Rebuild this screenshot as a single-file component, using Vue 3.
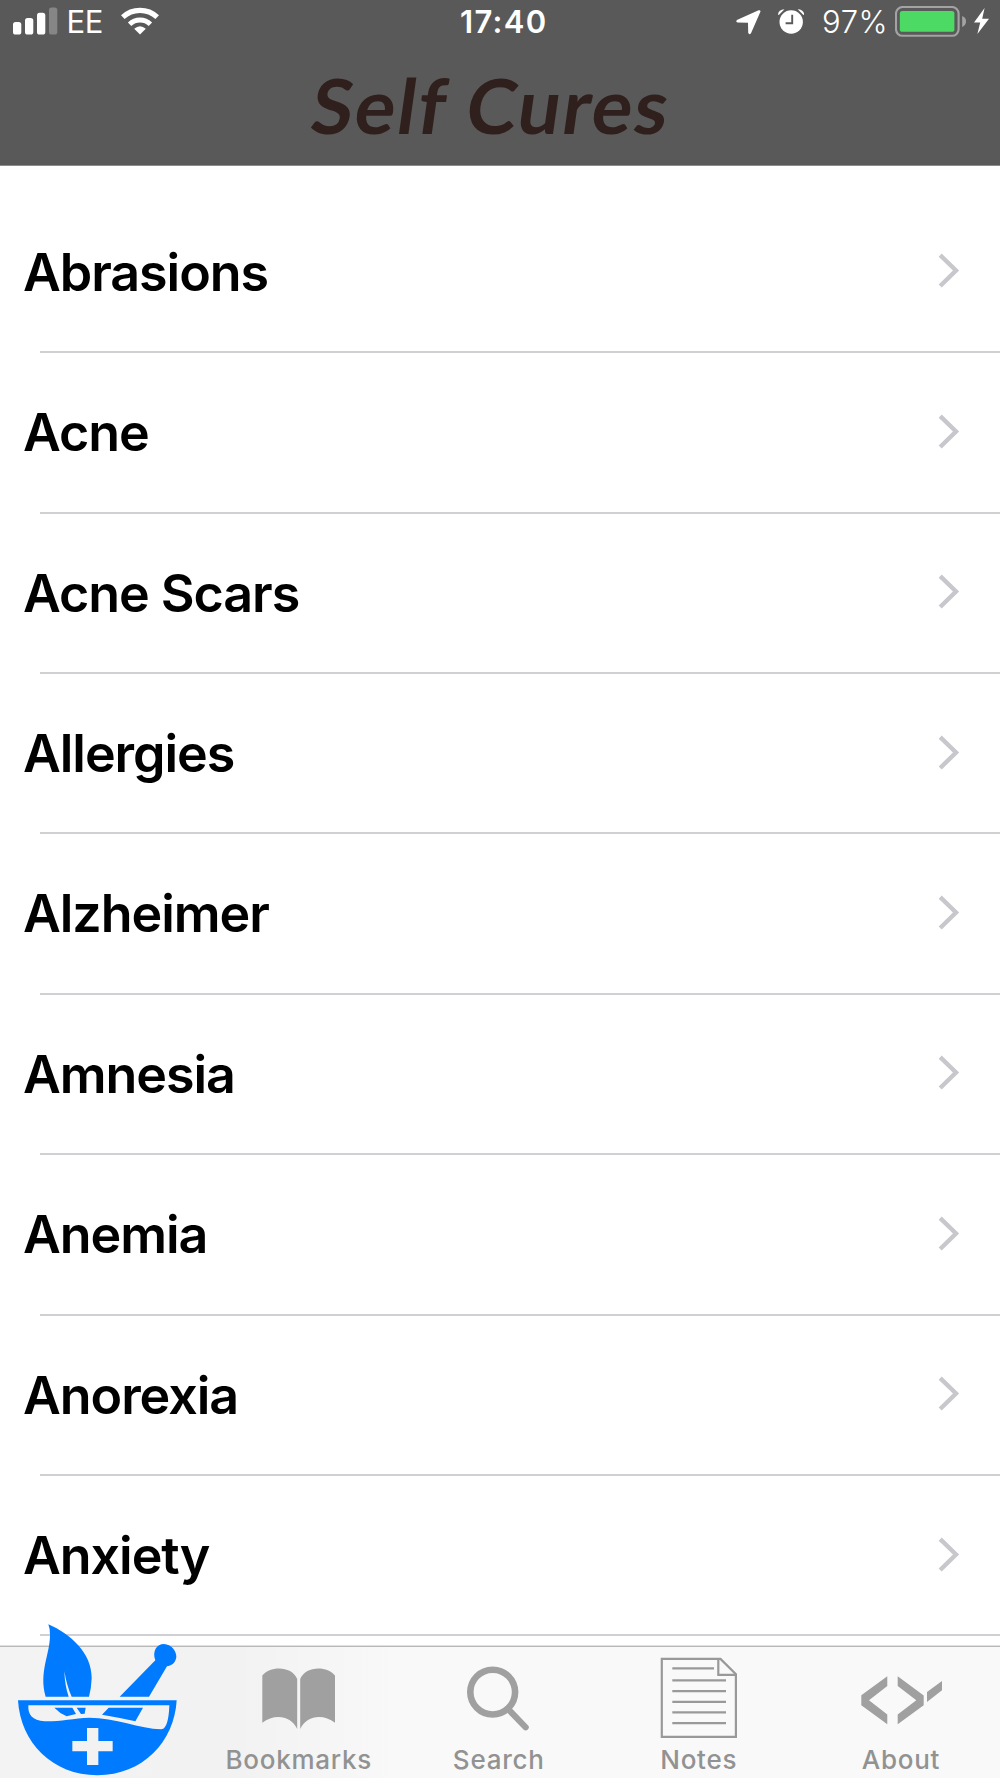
<template>
  <div class="app">
    <header class="header">
      <div class="status">
        <div class="status-left">
          <svg class="signal" width="45" height="28" viewBox="0 0 45 28" fill="#fff">
            <rect x="0" y="15" width="8.3" height="12.6" rx="2.6" />
            <rect x="12" y="11" width="8.3" height="16.6" rx="2.6" />
            <rect x="24" y="5.8" width="8.3" height="21.8" rx="2.6" />
            <rect x="36" y="0.5" width="8.3" height="27.1" rx="2.6" opacity="0.27" />
          </svg>
          <span class="carrier">EE</span>
          <svg class="wifi" width="38" height="28" viewBox="0 0 38 28">
            <g fill="none" stroke="#fff" stroke-width="5.2">
              <path d="M1.8 10.2a25.2 25.2 0 0 1 34.4 0" />
              <path d="M8.6 17.2a15.2 15.2 0 0 1 20.8 0" stroke-width="5" />
            </g>
            <path d="M19 27.6L13.2 21.8Q19 16.6 24.8 21.8Z" fill="#fff" />
          </svg>
        </div>
        <span class="clock">17:40</span>
        <div class="status-right">
          <svg class="location" width="25" height="25" viewBox="0 0 25 25">
            <path d="M24.4 1.8L15 23.2Q13.2 25.4 12.2 22.8L12 12.8L1.6 12.4Q-1 11.4 1.4 9.8L22.6 0.2Q24.8-0.2 24.4 1.8Z" fill="#fff" />
          </svg>
          <svg class="alarm" width="26" height="25" viewBox="0 0 26 25">
            <circle cx="13.2" cy="13" r="11.7" fill="#fff" />
            <path d="M0 5.5Q0.5 0.5 6.5 0.2L0.8 6ZM26.2 5.5Q25.7 0.5 19.7 0.2L25.4 6Z" fill="#fff" />
            <path d="M14.2 5.8V14.2H7.6" fill="none" stroke="#595959" stroke-width="1.9" />
          </svg>
          <span class="percent">97%</span>
          <svg class="battery" width="72" height="31" viewBox="0 0 72 31">
            <rect x="1" y="1" width="62.6" height="28.8" rx="6.5" fill="none" stroke="#a3a3a3" stroke-width="2.1" />
            <rect x="4.8" y="5" width="54.6" height="20.8" rx="2.6" fill="#4cd964" />
            <path d="M67.2 10Q71 11.5 71 15.4T67.2 21Z" fill="#a3a3a3" />
          </svg>
          <svg class="bolt" width="15" height="26" viewBox="0 0 15 26">
            <path d="M10.6 0L0 14.4H6.2L3.4 26L15 10.8H8.2Z" fill="#fff" />
          </svg>
        </div>
      </div>
      <h1 class="title">Self Cures</h1>
    </header>

    <main class="list">
      <div v-for="item in ailments" :key="item" class="row">
        <span class="name">{{ item }}</span>
        <svg class="chevron" width="22" height="36" viewBox="0 0 22 36">
          <path d="M2.2 2.2L18 17.5L2.2 33" fill="none" stroke="#c7c7cc" stroke-width="4.4" />
        </svg>
      </div>
    </main>

    <nav class="tabs">
      <a class="tab active">
        <svg class="logo" width="200" height="168" viewBox="0 0 600 504">
          <g fill="#007aff">
            <path d="M145 43C212 72 276 130 275 205Q274 235 267 260H215Q201 230 193 184Q195 230 206 260H137C116 186 150 134 150 75Q150 55 145 43Z" />
            <path d="M359 260L466 151C456 124 470 102 492 102C513 103 530 122 529 142C526 160 513 168 501 169L447 260Z" />
            <path d="M54 271H530C523 395 428 496 292 496C157 496 61 397 54 271Z" />
          </g>
          <path d="M85 286H508C507 318 502 359 483 358C420 356 345 323 268 323C220 325 178 335 134 334C97 332 83 314 85 286Z" fill="#f2f2f2" />
          <path d="M163 293H217L228 312L200 319Q178 309 163 293ZM230 293H257L254 311L243 312ZM326 293H429L406 334Q355 322 306 314Z" fill="#007aff" />
          <path d="M261 354H295V393H338V424H295V465H261V424H217V393H261Z" fill="#f2f2f2" />
        </svg>
      </a>
      <a class="tab">
        <svg class="icon" width="200" height="100" viewBox="0 0 200 100" fill="#a0a0a0">
          <path d="M62.3 29.5C70 19.5 92 19.5 97.2 33V83C91 69 74 67.5 62.3 76.7Z" />
          <path d="M135 29.5C127.3 19.5 105.5 19.5 100.2 33V83C106.5 69 123.3 67.5 135 76.7Z" />
        </svg>
        <span class="label">Bookmarks</span>
      </a>
      <a class="tab">
        <svg class="icon" width="200" height="100" viewBox="0 0 200 100" fill="none" stroke="#a0a0a0">
          <circle cx="92.7" cy="46.1" r="22.4" stroke-width="6.6" />
          <path d="M108.5 63.5L125.7 81.3" stroke-width="6.2" stroke-linecap="round" />
        </svg>
        <span class="label">Search</span>
      </a>
      <a class="tab">
        <svg class="icon" width="200" height="100" viewBox="0 0 200 100" fill="none" stroke="#999" stroke-width="2.2">
          <path d="M120.5 12.9H61.8V90.9H135.9V28.3Z" />
          <path d="M118.3 12.9V28.8H135.9" />
          <path d="M72.3 22.4H114M72.3 34.4H126M72.3 45.1H126M72.3 55.8H126M72.3 66.4H126M72.3 77.1H126" />
        </svg>
        <span class="label">Notes</span>
      </a>
      <a class="tab">
        <svg class="icon" width="200" height="100" viewBox="0 0 200 100" fill="#a0a0a0">
          <path d="M87.3 30.3V40L69 54.3L87.3 68.5V78.3L61.3 59.3V49.3Z" />
          <path d="M97.7 30.3L123.7 49.5V59.3L97.7 78.3V68.5L116.3 54.3L97.7 40Z" />
          <path d="M142 35V44.3L127 56V46Z" />
        </svg>
        <span class="label about">About</span>
      </a>
    </nav>
  </div>
</template>

<script setup>
const ailments = [
  'Abrasions',
  'Acne',
  'Acne Scars',
  'Allergies',
  'Alzheimer',
  'Amnesia',
  'Anemia',
  'Anorexia',
  'Anxiety'
]
</script>

<style>
body { margin: 0; background: #fff; }
</style>

<style scoped>
.app {
  width: 1000px;
  height: 1778px;
  display: flex;
  flex-direction: column;
  overflow: hidden;
  background: #fff;
  color: #000;
  font-family: Inter, "Liberation Sans", sans-serif;
}

svg { display: block; flex-shrink: 0; }

.header {
  box-sizing: border-box;
  height: 166px;
  flex-shrink: 0;
  background: #595959;
  border-bottom: 1px solid #8c8c8c;
}

.status {
  height: 44px;
  display: grid;
  grid-template-columns: 1fr 90px 1fr;
  padding: 0 11px 0 13px;
  color: #fff;
  font-size: 31px;
  line-height: 44px;
}
.status-left, .status-right { display: flex; align-items: flex-start; }
.status-right { justify-content: flex-end; }
.signal { margin-top: 7px; }
.carrier { width: 52px; margin-left: 8.5px; margin-right: 2.5px; font-weight: 400; letter-spacing: -0.5px; }
.wifi { margin-top: 7px; }
.clock { text-align: center; font-weight: 600; white-space: nowrap; margin-left: 4px; letter-spacing: 1.3px; }
.location { margin-top: 10px; margin-right: 17px; }
.alarm { margin-top: 9px; margin-right: 18px; }
.percent { width: 65px; font-weight: 350; letter-spacing: 0.6px; white-space: nowrap; margin-right: 8px; }
.battery { margin-top: 6px; margin-right: 7px; }
.bolt { margin-top: 8px; }

.title {
  margin: 16px 0 0 -17px;
  text-align: center;
  font-family: Lato, sans-serif;
  font-size: 76px;
  line-height: 90px;
  font-weight: 700;
  letter-spacing: 1.9px;
  color: #30201d;
  /* upright letterforms leaned over, so the f keeps its straight foot */
  transform: skewX(-8deg);
}

.list {
  height: 1480px;
  padding-top: 26.8px;
  box-sizing: border-box;
  flex-shrink: 0;
}
.row {
  box-sizing: border-box;
  height: 160.4px;
  display: flex;
  justify-content: space-between;
  align-items: flex-start;
  padding: 0 40px 0 23px;
  background: linear-gradient(#d0d0d4, #d0d0d4) 40px 100% / 960px 2px no-repeat;
}
.name {
  margin-top: 47px;
  font-size: 52px;
  line-height: 66px;
  font-weight: 600;
  letter-spacing: -1.05px;
}
.chevron { margin-top: 60.7px; }

.tabs {
  box-sizing: border-box;
  height: 132px;
  flex-shrink: 0;
  display: grid;
  grid-template-columns: repeat(5, 200px);
  background: linear-gradient(90deg, #f3f3f3 0, #f2f2f2 240px, #f9f9f9 400px);
  box-shadow: 0 -1px 0 #e0e0e0, inset 0 1px 0 #b9b9b9;
}
.tab { display: flex; flex-direction: column; align-items: center; }
.logo { margin-top: -36px; }
.label {
  height: 32px;
  line-height: 32px;
  margin-top: -2.5px;
  margin-left: -2.5px;
  font-size: 26px;
  font-weight: 500;
  letter-spacing: 0.75px;
  color: #929292;
}
.about { margin-left: 2px; }
</style>
